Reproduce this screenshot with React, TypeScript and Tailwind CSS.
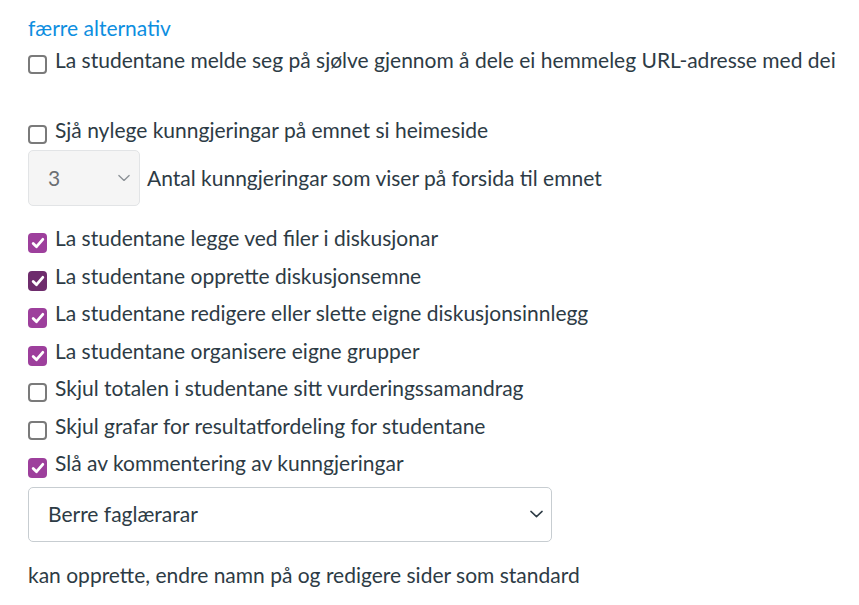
import React from 'react'

const font = { fontFamily: 'Lato, "Noto Sans", sans-serif' }

function Chevron({ className }: { className?: string }) {
  return (
    <svg viewBox="0 0 14 8" className={className} fill="none" stroke="currentColor" strokeWidth="1.6" strokeLinecap="round" strokeLinejoin="round">
      <path d="M1 1.2 7 6.8 13 1.2" />
    </svg>
  )
}

function Box({ checked, dark }: { checked?: boolean; dark?: boolean }) {
  if (checked) {
    return (
      <span
        className={`mt-[9px] flex h-[20px] w-[19px] shrink-0 items-center justify-center rounded-[4px] ${
          dark ? 'bg-[#6e2c6c]' : 'bg-[#9d3f9c]'
        }`}
      >
        <svg viewBox="0 0 16 16" className="h-[14px] w-[14px]" fill="none" stroke="#fff" strokeWidth="3.2" strokeLinecap="round" strokeLinejoin="round">
          <path d="M2.5 8.5 6.3 12.2 13.5 3.8" />
        </svg>
      </span>
    )
  }
  return <span className="mt-[9px] h-[19px] w-[19px] shrink-0 rounded-[4px] border-2 border-[#7a7a7a] bg-white" />
}

function Row({ label, checked, dark }: { label: string; checked?: boolean; dark?: boolean }) {
  return (
    <label className="flex h-[37.5px] items-start gap-2">
      <Box checked={checked} dark={dark} />
      <span className="leading-[28px] whitespace-nowrap">{label}</span>
    </label>
  )
}

export default function App() {
  return (
    <div className="min-h-screen bg-white pl-[28px] pt-[14px] text-[21px] text-[#2d3b45]" style={font}>
      <a className="block leading-[28px] text-[#0d8ee0]">færre alternativ</a>

      <div className="mt-[4px] h-[70px]">
        <Row label="La studentane melde seg på sjølve gjennom å dele ei hemmeleg URL-adresse med dei" />
      </div>

      <div className="h-[34px]">
        <Row label="Sjå nylege kunngjeringar på emnet si heimeside" />
      </div>

      <div className="flex items-center gap-[7px]">
        <div className="flex h-[56px] w-[112px] items-center justify-between rounded-[5px] border border-[#e2e4e6] bg-[#f5f5f5] pl-[19px] pr-[9px] text-[#6b6f72]">
          <span>3</span>
          <Chevron className="h-[8px] w-[12px] text-[#8b9196]" />
        </div>
        <span className="leading-[28px]">Antal kunngjeringar som viser på forsida til emnet</span>
      </div>

      <div className="mt-[18px] flex flex-col">
        <Row label="La studentane legge ved filer i diskusjonar" checked />
        <Row label="La studentane opprette diskusjonsemne" checked dark />
        <Row label="La studentane redigere eller slette eigne diskusjonsinnlegg" checked />
        <Row label="La studentane organisere eigne grupper" checked />
        <Row label="Skjul totalen i studentane sitt vurderingssamandrag" />
        <Row label="Skjul grafar for resultatfordeling for studentane" />
        <Row label="Slå av kommentering av kunngjeringar" checked />
      </div>

      <div className="flex h-[55px] w-[524px] items-center justify-between rounded-[5px] border border-[#c7cdd1] bg-white pl-[19px] pr-[8px]">
        <span>Berre faglærarar</span>
        <Chevron className="h-[8px] w-[13px] text-[#2d3b45]" />
      </div>

      <p className="mt-[19px] leading-[28px]">kan opprette, endre namn på og redigere sider som standard</p>
    </div>
  )
}
